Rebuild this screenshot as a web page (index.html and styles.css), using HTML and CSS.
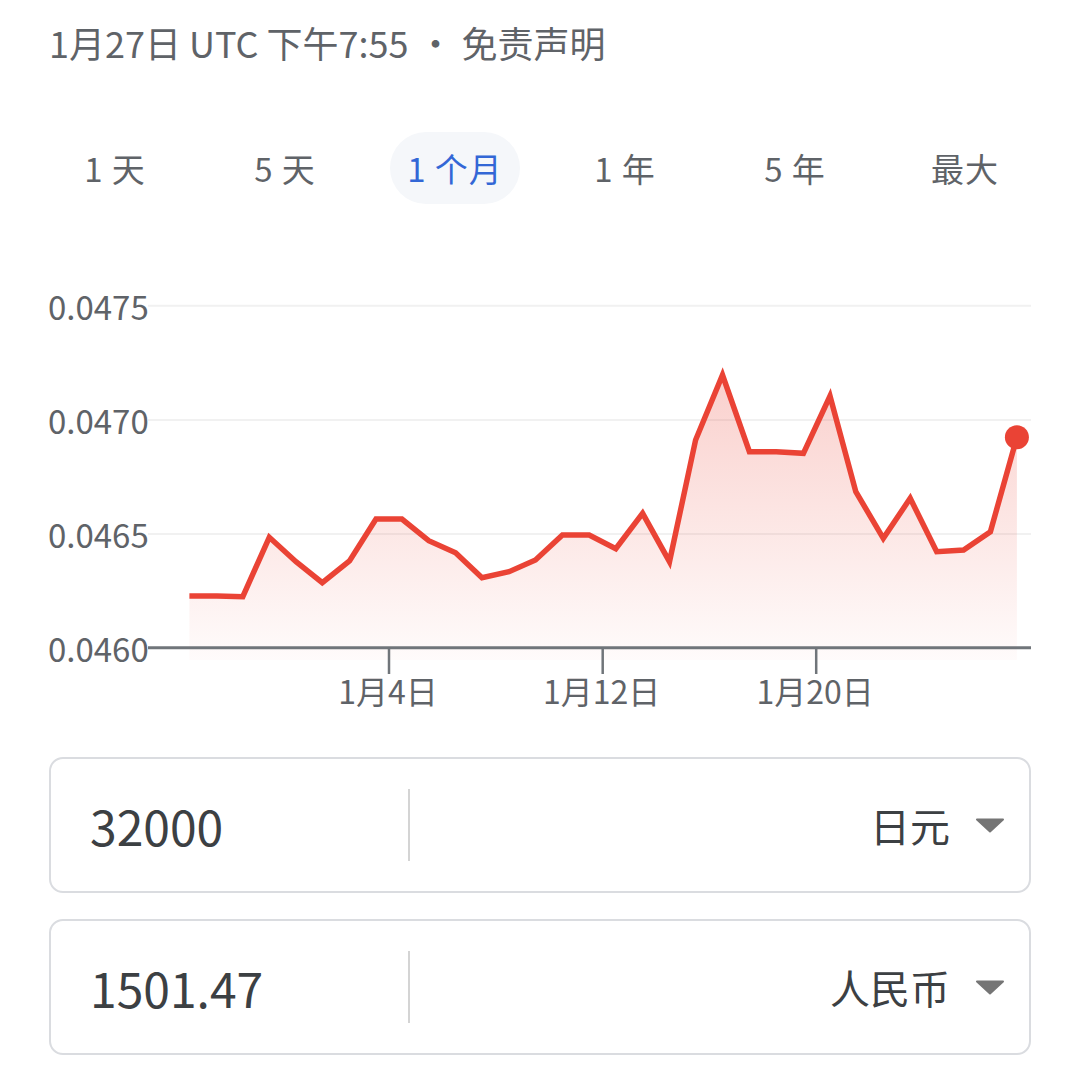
FILE: index.html
```html
<!DOCTYPE html>
<html lang="zh-CN">
<head>
    <meta charset="UTF-8">
    <meta name="viewport" content="width=device-width, initial-scale=1.0">
    <title>日元 兑 人民币</title>
    <link rel="stylesheet" href="styles.css">
</head>
<body>
    <div class="updated">
        1月27日 UTC 下午7:55<span class="dot">•</span>免责声明
    </div>

    <div class="ranges">
        <span class="range">1 天</span>
        <span class="range">5 天</span>
        <span class="range active">1 个月</span>
        <span class="range">1 年</span>
        <span class="range">5 年</span>
        <span class="range">最大</span>
    </div>

    <svg class="chart" viewBox="0 270 1080 450" width="1080" height="450">
        <defs>
            <linearGradient id="area" x1="0" y1="375" x2="0" y2="660" gradientUnits="userSpaceOnUse">
                <stop offset="0" stop-color="#ea4335" stop-opacity="0.25"/>
                <stop offset="1" stop-color="#ea4335" stop-opacity="0.02"/>
            </linearGradient>
        </defs>

        <!-- grid -->
        <line class="grid" x1="148" y1="305.7" x2="1031" y2="305.7"/>
        <line class="grid" x1="148" y1="420" x2="1031" y2="420"/>
        <line class="grid" x1="148" y1="534" x2="1031" y2="534"/>

        <text class="y-label" x="48" y="319.5">0.0475</text>
        <text class="y-label" x="48" y="433.5">0.0470</text>
        <text class="y-label" x="48" y="547.5">0.0465</text>
        <text class="y-label" x="48" y="661.5">0.0460</text>

        <polygon class="area" points="189.4,660 189.4,596 217,596 242.8,596.7 269.3,537.3 296,561.7 322.3,582.7 349.5,561 376,519 401.9,519 428.7,540.7 455.6,552.7 482,577.7 509,571.7 535.5,560 562.4,535 589.2,535 615.8,548.7 642.6,513.3 669.5,561.7 695.6,440 722.5,375 749.4,451.7 776.2,451.7 803.4,453.3 830,396 855.8,491.7 883.3,538.3 910.2,498.3 936.7,551.7 963.6,550 990.4,531.7 1016.9,437.3 1016.9,660"/>

        <!-- x axis -->
        <line class="axis" x1="148" y1="647.7" x2="1031" y2="647.7"/>
        <line class="tick" x1="389" y1="647.7" x2="389" y2="674"/>
        <line class="tick" x1="602.7" y1="647.7" x2="602.7" y2="674"/>
        <line class="tick" x1="816.2" y1="647.7" x2="816.2" y2="674"/>

        <text class="x-label" x="388" y="704">1月4日</text>
        <text class="x-label" x="601.7" y="704">1月12日</text>
        <text class="x-label" x="815.2" y="704">1月20日</text>

        <polyline class="line" points="189.4,596 217,596 242.8,596.7 269.3,537.3 296,561.7 322.3,582.7 349.5,561 376,519 401.9,519 428.7,540.7 455.6,552.7 482,577.7 509,571.7 535.5,560 562.4,535 589.2,535 615.8,548.7 642.6,513.3 669.5,561.7 695.6,440 722.5,375 749.4,451.7 776.2,451.7 803.4,453.3 830,396 855.8,491.7 883.3,538.3 910.2,498.3 936.7,551.7 963.6,550 990.4,531.7 1016.9,437.3"/>
        <circle class="last" cx="1016.9" cy="437.3" r="12"/>
    </svg>

    <div class="converter">
        <div class="field">
            <div class="amount">32000</div>
            <div class="divider"></div>
            <div class="currency">
                日元
                <svg class="caret" viewBox="0 0 30 15" width="30" height="15"><path d="M2 1.5 H28 L15 13.5 Z"/></svg>
            </div>
        </div>
        <div class="field">
            <div class="amount">1501.47</div>
            <div class="divider"></div>
            <div class="currency">
                人民币
                <svg class="caret" viewBox="0 0 30 15" width="30" height="15"><path d="M2 1.5 H28 L15 13.5 Z"/></svg>
            </div>
        </div>
    </div>
</body>
</html>
```

FILE: styles.css
```css
body {
    font-family: "Noto Sans CJK SC", "Noto Sans", sans-serif;
    margin: 0;
    padding: 0;
    background-color: #fff;
    color: #5f6368;
}

.updated {
    padding: 16px 0 0 49px;
    font-size: 36px;
    line-height: 52px;
    color: #5f6368;
}

.updated .dot {
    margin: 0 8px 0 9px;
}

.ranges {
    display: grid;
    grid-template-columns: repeat(6, 1fr);
    margin-top: 64px;
    padding: 0 30px;
}

.range {
    justify-self: center;
    height: 72px;
    line-height: 72px;
    padding: 0 17px;
    border-radius: 36px;
    font-size: 33px;
    letter-spacing: 1px;
    color: #5f6368;
}

.range.active {
    background-color: #f5f7fa;
    color: #3367d6;
}

.chart {
    display: block;
    margin-top: 66px;
}

.chart text {
    font-family: "Noto Sans CJK SC", "Noto Sans", sans-serif;
    fill: #5f6368;
}

.y-label {
    font-size: 33px;
}

.x-label {
    font-size: 32px;
    text-anchor: middle;
}

.grid {
    stroke: #f1f1f1;
    stroke-width: 2;
}

.axis {
    stroke: #70757a;
    stroke-width: 3;
}

.tick {
    stroke: #70757a;
    stroke-width: 2.5;
}

.area {
    fill: url(#area);
}

.line {
    fill: none;
    stroke: #ea4335;
    stroke-width: 5.5;
    stroke-linejoin: miter;
}

.last {
    fill: #ea4335;
}

.converter {
    padding: 37px 49px 0 49px;
}

.field {
    display: flex;
    align-items: center;
    height: 136px;
    box-sizing: border-box;
    border: 2px solid #dadce0;
    border-radius: 14px;
    margin-bottom: 26px;
}

.amount {
    width: 357px;
    box-sizing: border-box;
    padding-left: 39px;
    font-size: 48px;
    color: #3c4043;
}

.divider {
    width: 2px;
    height: 72px;
    background-color: #d4d4d4;
}

.currency {
    flex: 1;
    display: flex;
    align-items: center;
    justify-content: flex-end;
    padding-right: 24px;
    font-size: 40px;
    color: #3c4043;
}

.caret {
    margin-left: 25px;
}

.caret path {
    fill: #757575;
    stroke: #757575;
    stroke-width: 2;
    stroke-linejoin: round;
}
```
